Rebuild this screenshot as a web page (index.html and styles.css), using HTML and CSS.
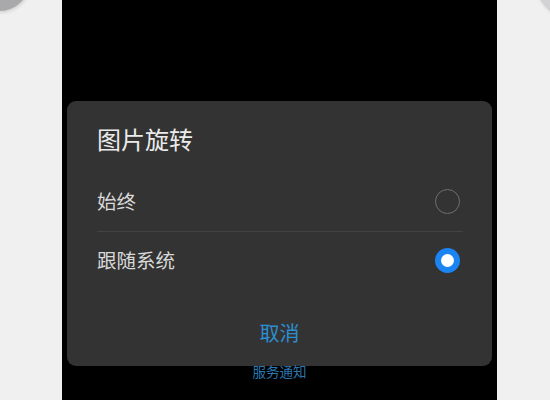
FILE: index.html
```html
<!DOCTYPE html>
<html lang="zh">
<head>
<meta charset="utf-8">
<link rel="stylesheet" href="styles.css">
</head>
<body>
<div class="stage">
  <div class="blob blob-left"></div>
  <div class="blob blob-right"></div>
  <div class="screen">
    <div class="dialog">
      <div class="title">图片旋转</div>
      <div class="options">
        <div class="option">
          <span class="label">始终</span>
          <span class="radio"></span>
        </div>
        <div class="divider"></div>
        <div class="option">
          <span class="label">跟随系统</span>
          <span class="radio checked"></span>
        </div>
      </div>
      <div class="footer">取消</div>
    </div>
    <div class="below">服务通知</div>
  </div>
</div>
</body>
</html>
```
FILE: styles.css
```css
html, body {
  margin: 0;
  padding: 0;
  overflow: hidden;
}
body {
  background: #f0f0f0;
  font-family: "Noto Sans CJK SC", "Noto Sans", sans-serif;
}
.stage {
  position: relative;
  width: 550px;
  height: 400px;
  overflow: hidden;
}
.blob {
  position: absolute;
  border-radius: 50%;
}
.blob-left {
  left: -29px;
  top: -47px;
  width: 58px;
  height: 58px;
  background: #a9a9ac;
  box-shadow: 0 0 3px 2px #d6d6d8;
}
.blob-right {
  left: 535px;
  top: -60px;
  width: 80px;
  height: 80px;
  background: #d2d2d4;
  box-shadow: 0 0 3px 1px #e2e2e2;
}
.screen {
  margin-left: 62px;
  width: 435px;
  height: 400px;
  background: #000;
  padding-top: 101px;
  box-sizing: border-box;
  display: flex;
  flex-direction: column;
  align-items: center;
}
.dialog {
  width: 425px;
  height: 265px;
  box-sizing: border-box;
  background: #333333;
  border-radius: 9px;
  padding: 20px 32px 0 30px;
  display: flex;
  flex-direction: column;
}
.title {
  font-size: 24px;
  line-height: 36px;
  color: #ebebeb;
}
.options {
  margin-top: 16px;
}
.option {
  height: 58px;
  display: flex;
  align-items: center;
  justify-content: space-between;
}
.label {
  font-size: 19.5px;
  line-height: 24px;
  padding-bottom: 3px;
  color: #d9d9d9;
}
.divider {
  height: 1px;
  background: #434343;
  margin-right: -3px;
}
.radio {
  width: 25px;
  height: 25px;
  box-sizing: border-box;
  border-radius: 50%;
  border: 1.5px solid #6e6e6e;
  margin-bottom: 1px;
}
.radio.checked {
  border: none;
  background: #1a84f2;
  display: flex;
  align-items: center;
  justify-content: center;
}
.radio.checked::after {
  content: "";
  width: 13px;
  height: 13px;
  border-radius: 50%;
  background: #ffffff;
}
.footer {
  margin-top: 19px;
  margin-right: -2px;
  height: 48px;
  line-height: 48px;
  text-align: center;
  font-size: 20px;
  color: #2b8fd2;
}
.below {
  margin-top: -2px;
  font-size: 13.5px;
  line-height: 14px;
  color: #2a78b2;
}
```
